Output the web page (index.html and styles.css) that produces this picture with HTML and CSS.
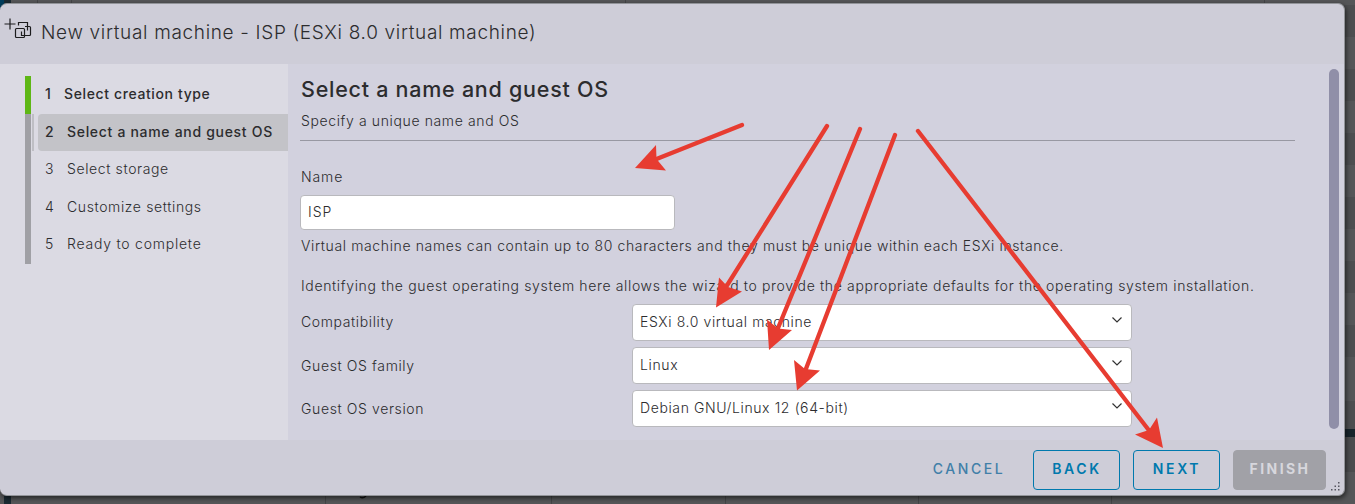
FILE: index.html
```html
<!DOCTYPE html>
<html lang="en">
<head>
<meta charset="utf-8">
<title>New virtual machine</title>
<link rel="stylesheet" href="styles.css">
</head>
<body>
<div class="page">
  <svg class="backdrop" width="1355" height="504" aria-hidden="true">
    <rect width="1355" height="504" fill="#555658"/>
    <rect width="4" height="12" fill="#003d5c"/><rect x="4" width="7" height="504" fill="#1b2a32"/>
    <path d="M37.5 0V4M71.5 0V4M625.5 0V4M1264.5 0V4M325.5 495V504M551.5 495V504M725.5 495V504M918.5 495V504M1111.5 495V504" stroke="#444547"/>
    <rect x="1344" y="5" width="11" height="32" fill="#4d4e50"/><rect x="1344" y="69" width="11" height="32" fill="#4d4e50"/>
    <rect x="1344" y="133" width="11" height="32" fill="#4d4e50"/><rect x="1344" y="197" width="11" height="32" fill="#4d4e50"/>
    <rect x="1344" y="261" width="11" height="32" fill="#4d4e50"/><rect x="1344" y="325" width="11" height="32" fill="#4d4e50"/>
    <rect x="1344" y="401" width="11" height="28" fill="#4d4e50"/><rect x="1344" y="429" width="11" height="8" fill="#17242b"/>
    <rect x="1344" y="437" width="11" height="35" fill="#4b4c4e"/>
    <path d="M360 497q3 2 6-1" stroke="#111" stroke-width="1.5" fill="none"/>
  </svg>
  <div class="dialog">
    <header class="head">
      <svg class="vm" width="30" height="26" viewBox="0 0 30 26" fill="none" stroke="#1c1c1e">
        <path d="M.5 8H11.500M6 2.500V13.500" stroke-width="1.200"/>
        <rect x="11.500" y="12.500" width="9" height="9" rx="1" stroke-width="1.200"/>
        <path d="M14.500 9.500V6.500H23.500V14.500" stroke-width="1.200"/>
        <path d="M21 10.500H25.500Q26.500 10.500 26.500 11.500V18.500Q26.500 19.500 25.500 19.500H17.500V15.500" stroke-width="1.200"/>
      </svg>
      <h1 class="title">New virtual machine - ISP (ESXi 8.0 virtual machine)</h1>
    </header>
    <div class="body">
      <nav class="side">
        <div class="step done"><b>1</b><span>Select creation type</span></div>
        <div class="step current"><div class="pill"><b>2</b><span>Select a name and guest OS</span></div></div>
        <div class="step"><b>3</b><span>Select storage</span></div>
        <div class="step"><b>4</b><span>Customize settings</span></div>
        <div class="step"><b>5</b><span class="ready">Ready to complete</span></div>
      </nav>
      <main class="main">
        <h2 class="heading">Select a name and guest OS</h2>
        <p class="sub">Specify a unique name and OS</p>
        <label class="name">Name</label>
        <div class="input">ISP</div>
        <p class="note n1">Virtual machine names can contain up to 80 characters and they must be unique within each ESXi instance.</p>
        <p class="note n2">Identifying the guest operating system here allows the wizard to provide the appropriate defaults for the operating system installation.</p>
        <div class="row"><label>Compatibility</label><div class="select"><span>ESXi 8.0 virtual machine</span><svg width="12" height="8" viewBox="0 0 12 8"><path d="M1.500 1.500L6 6L10.500 1.500"/></svg></div></div>
        <div class="row"><label>Guest OS family</label><div class="select"><span>Linux</span><svg width="12" height="8" viewBox="0 0 12 8"><path d="M1.500 1.500L6 6L10.500 1.500"/></svg></div></div>
        <div class="row"><label>Guest OS version</label><div class="select"><span>Debian GNU/Linux 12 (64-bit)</span><svg width="12" height="8" viewBox="0 0 12 8"><path d="M1.500 1.500L6 6L10.500 1.500"/></svg></div></div>
      </main>
      <div class="scroll"></div>
    </div>
    <footer class="foot">
      <div class="btn cancel">CANCEL</div>
      <div class="btn back">BACK</div>
      <div class="btn next">NEXT</div>
      <div class="btn finish">FINISH</div>
    </footer>
    <svg class="grip" width="10" height="10" fill="#55555f"><path d="M7 0h1.500v1.500h-1.500zM3.500 3.500h1.500v1.500h-1.500zM7 3.500h1.500v1.500h-1.500zM0 7h1.500v1.500h-1.500zM3.500 7h1.500v1.500h-1.500zM7 7h1.500v1.500h-1.500z"/></svg>
  </div>
  <svg class="arrows" width="1355" height="504" fill="#e73c31" stroke="#e73c31" stroke-width="4.300" stroke-linecap="round">
    <path d="M742 125L654 160M827 126L726 287M860 129L776 333M895 135L804 374M918 131L1151 433"/>
    <path stroke="none" d="M635 168L656 145L656.500 159L666 170.500ZM716 307.500L719 277.500L728 287L742 291.500ZM769 350L767 319.500L778 328.500L792 330ZM797 390.500L794 360L805 369L820 370.500ZM1163 448L1157 417.500L1149 430L1135 434.500Z"/>
  </svg>
</div>
</body>
</html>
```
FILE: styles.css
```css
* { box-sizing: border-box; }
body { margin: 0; font-family: Inter, "Open Sans", sans-serif; font-size: 14px; font-weight: 300; letter-spacing: .62px; color: #2c2c2e; overflow: hidden; }
h1, h2, p { margin: 0; font-weight: 300; white-space: nowrap; }
.page { position: relative; width: 1355px; height: 504px; padding-top: 3px; }
.backdrop, .arrows { position: absolute; left: 0; top: 0; }
.arrows { z-index: 3; pointer-events: none; }
.dialog { position: relative; width: 1345px; height: 493px; display: flex; flex-direction: column; background: #cecdd8; border: 1px solid #929499; border-left: 0; border-radius: 7px; overflow: hidden; box-shadow: 1px 2px 5px #0009; }
.head { height: 60px; flex: none; display: flex; padding: 12px 0 0 4px; }
.vm { flex: none; }
.title { font-size: 19px; line-height: 26px; margin: 4px 0 0 7px; letter-spacing: .67px; }
.body { height: 376px; flex: none; display: flex; background: #d2d1de; }
.side { width: 288px; background: #dbdae3; padding: 12px 0 0 25px; }
.step { height: 37.500px; border-left: 6px solid #a0a0a5; padding: 0 0 2px 14px; display: flex; align-items: center; white-space: nowrap; }
.step b { width: 22px; font-weight: inherit; letter-spacing: 0; }
.ready { letter-spacing: .77px; }
.done { border-color: #5eb715; font-weight: 500; height: 38px; padding-bottom: 3px; }
.done b { width: 19px; }
.current { font-weight: 500; padding: 0 0 0 1px; height: 37px; letter-spacing: .69px; }
.current::before { content: ""; width: 2px; height: 37px; background: #bebec4; }
.pill { flex: 1; height: 37px; display: flex; align-items: center; margin-left: 4px; padding: 0 0 2px 7px; background: #c3c3c8; border-radius: 4px 0 0 4px; }
.main { width: 995px; margin-left: 12px; display: flex; flex-direction: column; }
.heading { font-size: 21.500px; font-weight: 500; line-height: 30px; margin-top: 10px; letter-spacing: .74px; }
.sub { line-height: 20px; margin-top: 7px; height: 30px; border-bottom: 1px solid #9898a2; }
.heading, .sub, .name, .note, .row label { text-indent: 1px; }
.name { line-height: 20px; margin-top: 26px; letter-spacing: .9px; }
.input, .select { background: #fff; border: 1px solid #b9b9bd; border-radius: 4px; display: flex; align-items: center; padding: 0 7px 2px; }
.input { width: 375px; height: 35px; margin-top: 8px; letter-spacing: 1px; }
.note { line-height: 20px; }
.n1 { margin-top: 6px; }
.n2 { margin-top: 20px; letter-spacing: .645px; }
.row { display: flex; height: 37px; margin-bottom: 6px; align-items: center; }
.n2 + .row { margin-top: 8px; }
.row label { width: 332px; }
.n2 + .row label { padding-bottom: 2px; }
.select { width: 500px; height: 37px; justify-content: space-between; }
.select svg { fill: none; stroke: #333; stroke-width: 1.200; margin: -3px 1px 0 0; }
.scroll { width: 10px; height: 360px; margin: 5px 0 0 34px; border-radius: 5px; background: #908fa8; }
.foot { height: 55px; display: flex; justify-content: flex-end; padding: 10px 18px 0 0; gap: 13px; }
.btn { height: 40px; border-radius: 4px; border: 1px solid #0079ad; color: #0079ad; font-size: 14px; font-weight: 600; letter-spacing: 2.600px; text-indent: 1px; display: flex; align-items: center; justify-content: center; padding-bottom: 4px; }
.cancel { width: 103px; border: 0; color: #417fa8; font-weight: 500; }
.back, .next { width: 87px; }
.finish { width: 93px; background: #a1a1a7; border-color: #a1a1a7; color: #d7d7dd; font-weight: 700; letter-spacing: 2.400px; }
.grip { position: absolute; right: 3px; bottom: 3px; }
```
